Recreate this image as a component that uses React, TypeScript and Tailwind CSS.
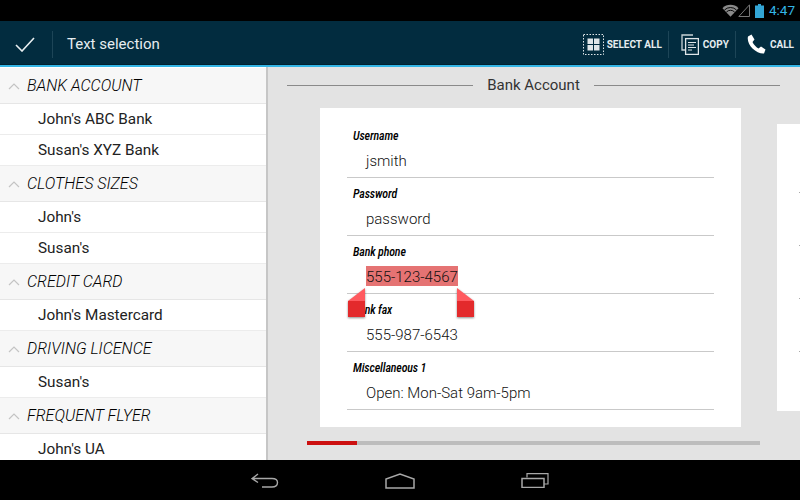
import React from "react";

const groups = [
  { title: "BANK ACCOUNT", items: ["John's ABC Bank", "Susan's XYZ Bank"] },
  { title: "CLOTHES SIZES", items: ["John's", "Susan's"] },
  { title: "CREDIT CARD", items: ["John's Mastercard"] },
  { title: "DRIVING LICENCE", items: ["Susan's"] },
  { title: "FREQUENT FLYER", items: ["John's UA"] },
];

const fields = [
  { label: "Username", value: "jsmith" },
  { label: "Password", value: "password" },
  { label: "Bank phone", value: "555-123-4567", selected: true },
  { label: "Bank fax", value: "555-987-6543" },
  { label: "Miscellaneous 1", value: "Open: Mon-Sat 9am-5pm" },
];

function StatusBar() {
  return (
    <div className="h-[21px] shrink-0 bg-black flex items-center justify-end pr-[5px]">
      <svg width="17" height="13" viewBox="0 0 18 13" className="-mr-[1px]">
        <path d="M0.5 4 A12 12 0 0 1 17.5 4 L9 13 Z" fill="#8a8a8a" />
        <path d="M2.6 6 A9 9 0 0 1 15.4 6 M4.6 8.2 A6 6 0 0 1 13.4 8.2" stroke="#000" strokeWidth="1" fill="none" />
      </svg>
      <svg width="12" height="13" viewBox="0 0 12 13" className="mr-[5px]">
        <path d="M11.5 0.8 V12.5 H0.8 Z" fill="none" stroke="#777" strokeWidth="1" />
      </svg>
      <svg width="9" height="14" viewBox="0 0 9 14" className="mr-[5px]">
        <rect x="3" y="0" width="3" height="2" fill="#33a5d5" />
        <rect x="0" y="1.5" width="9" height="12.5" fill="#33a5d5" />
      </svg>
      <span className="text-[13.5px] text-[#33b5e5] font-['Roboto',sans-serif] leading-none">4:47</span>
    </div>
  );
}

function ActionBar() {
  return (
    <div className="h-[44px] shrink-0 bg-[#022c3f] border-b border-[#01202e] pt-[3px] flex items-center text-[#e6edf0] font-['Roboto',sans-serif]">
      <div className="w-[53px] h-[27px] flex items-center pl-[15px] border-r border-[#1d4557]">
        <svg width="20" height="15" viewBox="0 0 20 15">
          <path d="M1 8 L7 14 L19 1" fill="none" stroke="#e8eef0" strokeWidth="1.6" />
        </svg>
      </div>
      <span className="ml-[14px] text-[15px]">Text selection</span>
      <div className="ml-auto flex items-center h-[27px] text-[10px] font-bold">
        <div className="flex items-center pr-[6px] border-r border-[#1d4557] h-full">
          <svg width="21" height="21" viewBox="0 0 21 21" className="mr-[3px]">
            <rect x="0.5" y="0.5" width="20" height="20" fill="none" stroke="#dfe6e9" strokeDasharray="1.5 1.5" />
            <rect x="4.5" y="4.5" width="5.5" height="5.5" fill="#dfe6e9" />
            <rect x="11" y="4.5" width="5.5" height="5.5" fill="#dfe6e9" />
            <rect x="4.5" y="11" width="5.5" height="5.5" fill="#dfe6e9" />
            <rect x="11" y="11" width="5.5" height="5.5" fill="#dfe6e9" />
          </svg>
          <span>SELECT ALL</span>
        </div>
        <div className="flex items-center pl-[12px] pr-[6px] border-r border-[#1d4557] h-full">
          <svg width="18" height="21" viewBox="0 0 18 21" className="mr-[4px]">
            <path d="M12 1 H1 V16 H4" fill="none" stroke="#c8d2d6" strokeWidth="1.3" />
            <rect x="4.6" y="4.6" width="12.8" height="15.8" fill="#022c3f" stroke="#dfe6e9" strokeWidth="1.3" />
            <path d="M7 8.5 H15 M7 11 H13 M7 13.5 H15 M7 16 H11" stroke="#dfe6e9" strokeWidth="1" />
          </svg>
          <span>COPY</span>
        </div>
        <div className="flex items-center pl-[11px] pr-[6px] h-full">
          <svg width="19" height="20" viewBox="0 0 19 20" className="mr-[4px]">
            <path d="M4.5 0.5 L1 2.5 C0 6 2 11 5.5 14.5 C9 18 14 20 17 19.5 L18.5 15.5 L14 12.5 L11.5 14.5 C9.5 13.5 6.5 10.5 5.5 8 L7.5 5.5 Z" fill="#fff" />
          </svg>
          <span>CALL</span>
        </div>
      </div>
    </div>
  );
}

function Sidebar() {
  return (
    <div className="w-[268px] shrink-0 bg-white border-r-2 border-[#c6c6c6] overflow-hidden font-['Roboto',sans-serif] pt-px">
      {groups.map((group) => (
        <div key={group.title}>
          <div className="h-[36px] bg-[#f7f7f7] border-b border-[#e6e6e6] flex items-center pl-[8px] pt-[1px]">
            <svg width="12" height="7" viewBox="0 0 12 7" className="mr-[7px]">
              <path d="M1 6 L6 1 L11 6" fill="none" stroke="#c4c4c4" strokeWidth="1.2" />
            </svg>
            <span className="text-[16px] italic font-light text-black">{group.title}</span>
          </div>
          {group.items.map((item) => (
            <div key={item} className="h-[31px] border-b border-[#ececec] flex items-center pl-[38px] pt-[1px] text-[15.3px] text-[#222]">
              {item}
            </div>
          ))}
        </div>
      ))}
    </div>
  );
}

function SelectionHandle({ side }: { side: "left" | "right" }) {
  const shape = side === "left" ? "polygon(100% 0, 100% 100%, 0 100%, 0 45%)" : "polygon(0 0, 100% 45%, 100% 100%, 0 100%)";
  return (
    <div
      className={`absolute z-10 top-[52px] w-[17px] h-[29px] drop-shadow-[0_1px_1px_rgba(0,0,0,0.45)] ${side === "left" ? "left-[1px]" : "left-[110px]"}`}
    >
      <div className="w-full h-full" style={{ clipPath: shape, background: "linear-gradient(#ff5a5f 0 45%, #e32a2c 45% 100%)" }} />
    </div>
  );
}

function Field({ label, value, selected }: { label: string; value: string; selected?: boolean }) {
  return (
    <div className="relative h-[58px] mx-[27px] border-b border-[#c9c9c9]">
      <div className="pt-[8px] pl-[6px] text-[12px] leading-[16px] italic font-medium text-black [font-stretch:75%] tracking-[-0.15px]">
        {label}
      </div>
      <div className="pl-[19px] pt-[8px] text-[15px] leading-[18px] font-light text-[#111]">
        <span className={selected ? "bg-[#e57373] inline-block pt-[2px] -mt-[2px]" : ""}>{value}</span>
      </div>
      {selected && (
        <>
          <SelectionHandle side="left" />
          <SelectionHandle side="right" />
        </>
      )}
    </div>
  );
}

function Main() {
  return (
    <div className="flex-1 min-w-0 bg-[#e3e3e3] flex flex-col overflow-hidden font-['Roboto',sans-serif]">
      <div className="flex items-center h-[36px] pl-[19px] pr-[20px] text-[#333] text-[15px]">
        <div className="flex-1 h-px bg-[#8a8a8a]" />
        <span className="px-[14px]">Bank Account</span>
        <div className="flex-1 h-px bg-[#8a8a8a]" />
      </div>
      <div className="flex items-start pl-[52px] pt-[5px] gap-[36px]">
        <div className="w-[421px] h-[319px] pt-[12px] shrink-0 bg-white">
          {fields.map((field) => (
            <Field key={field.label} {...field} />
          ))}
        </div>
        {/* next card peeking in at the right edge */}
        <div className="w-[40px] h-[287px] shrink-0 bg-white mt-[16px] pt-[68px] pl-[22px]">
          <div className="h-px bg-[#aaaaaa] mb-[52px]" />
          <div className="h-px bg-[#aaaaaa] mb-[52px]" />
          <div className="h-px bg-[#aaaaaa] mb-[52px]" />
          <div className="h-px bg-[#aaaaaa]" />
        </div>
      </div>
      <div className="mt-[14px] ml-[39px] w-[453px] h-[4px] bg-[#bdbdbd]">
        <div className="w-[50px] h-full bg-[#cc1010]" />
      </div>
    </div>
  );
}

function NavBar() {
  return (
    <div className="h-[40px] shrink-0 bg-black flex items-center justify-center gap-[106px] pt-[1px]">
      <svg width="28" height="15" viewBox="0 0 28 15">
        <path d="M7 1 L1 5.5 L7 9.5 M1 5.5 H21 C25 5.5 26.5 7.5 26.5 9.5 C26.5 12.5 24.5 14 21 14 H11" fill="none" stroke="#a8a8a8" strokeWidth="1.4" />
      </svg>
      <svg width="30" height="16" viewBox="0 0 30 16">
        <path d="M1 15 V6 L15 1 L29 6 V15 Z" fill="none" stroke="#a8a8a8" strokeWidth="1.5" />
      </svg>
      <svg width="28" height="15" viewBox="0 0 28 15">
        <rect x="1" y="5.5" width="22" height="9" fill="none" stroke="#a8a8a8" strokeWidth="1.5" />
        <path d="M6 4.5 V0.7 H27 V11 H23" fill="none" stroke="#a8a8a8" strokeWidth="1.2" />
      </svg>
    </div>
  );
}

export default function App() {
  return (
    <div className="w-[800px] h-[500px] flex flex-col overflow-hidden bg-white">
      <StatusBar />
      <ActionBar />
      <div className="h-[2px] shrink-0 bg-[#33b5e5]" />
      <div className="flex-1 min-h-0 flex">
        <Sidebar />
        <Main />
      </div>
      <NavBar />
    </div>
  );
}
